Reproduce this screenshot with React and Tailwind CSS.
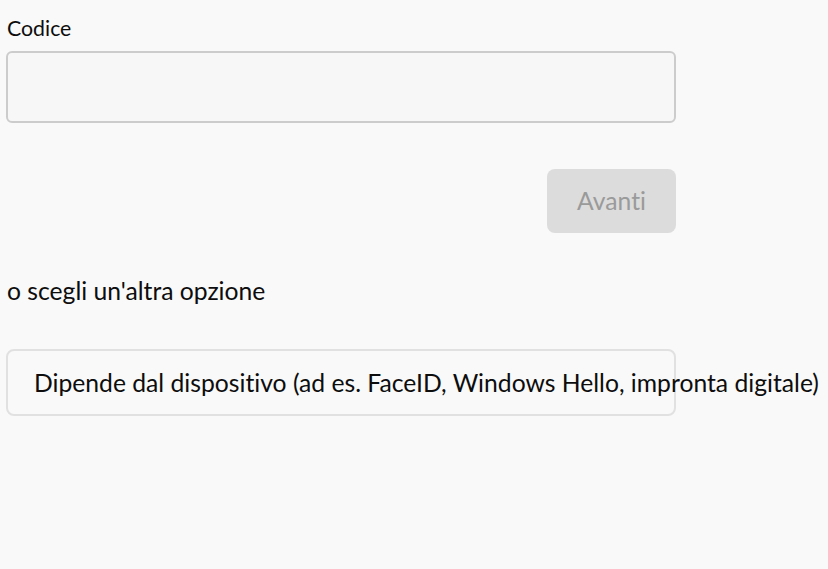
export default function App() {
  return (
    <div className="min-h-screen bg-[#f9f9f9] font-['Lato',sans-serif] text-[#0d0d0d] overflow-hidden [font-variant-ligatures:none]">
      <div className="w-[670px] ml-[6px] pt-[14px]">
        <label className="block text-[21.3px] leading-[28px] pl-[1px]">Codice</label>
        <input
          type="text"
          className="mt-[9px] block w-full h-[72px] rounded-[6px] border-2 border-[#cccccc] bg-[#f7f7f7] px-4 text-[22px] outline-none"
        />
        <div className="mt-[46px] flex justify-end">
          <button
            disabled
            className="w-[129px] h-[64px] rounded-[8px] bg-[#dcdcdc] text-[24.7px] text-[#9a9a9a]"
          >
            Avanti
          </button>
        </div>
        <p className="mt-[42px] text-[24.7px] leading-[32px] pl-[1px]">o scegli un'altra opzione</p>
        <button className="mt-[42px] block w-full h-[67px] rounded-[8px] border-2 border-[#e1e1e1] bg-[#f9f9f9] pl-[26px] text-left text-[24.7px] whitespace-nowrap">
          Dipende dal dispositivo (ad es. FaceID, Windows Hello, impronta digitale)
        </button>
      </div>
    </div>
  );
}
